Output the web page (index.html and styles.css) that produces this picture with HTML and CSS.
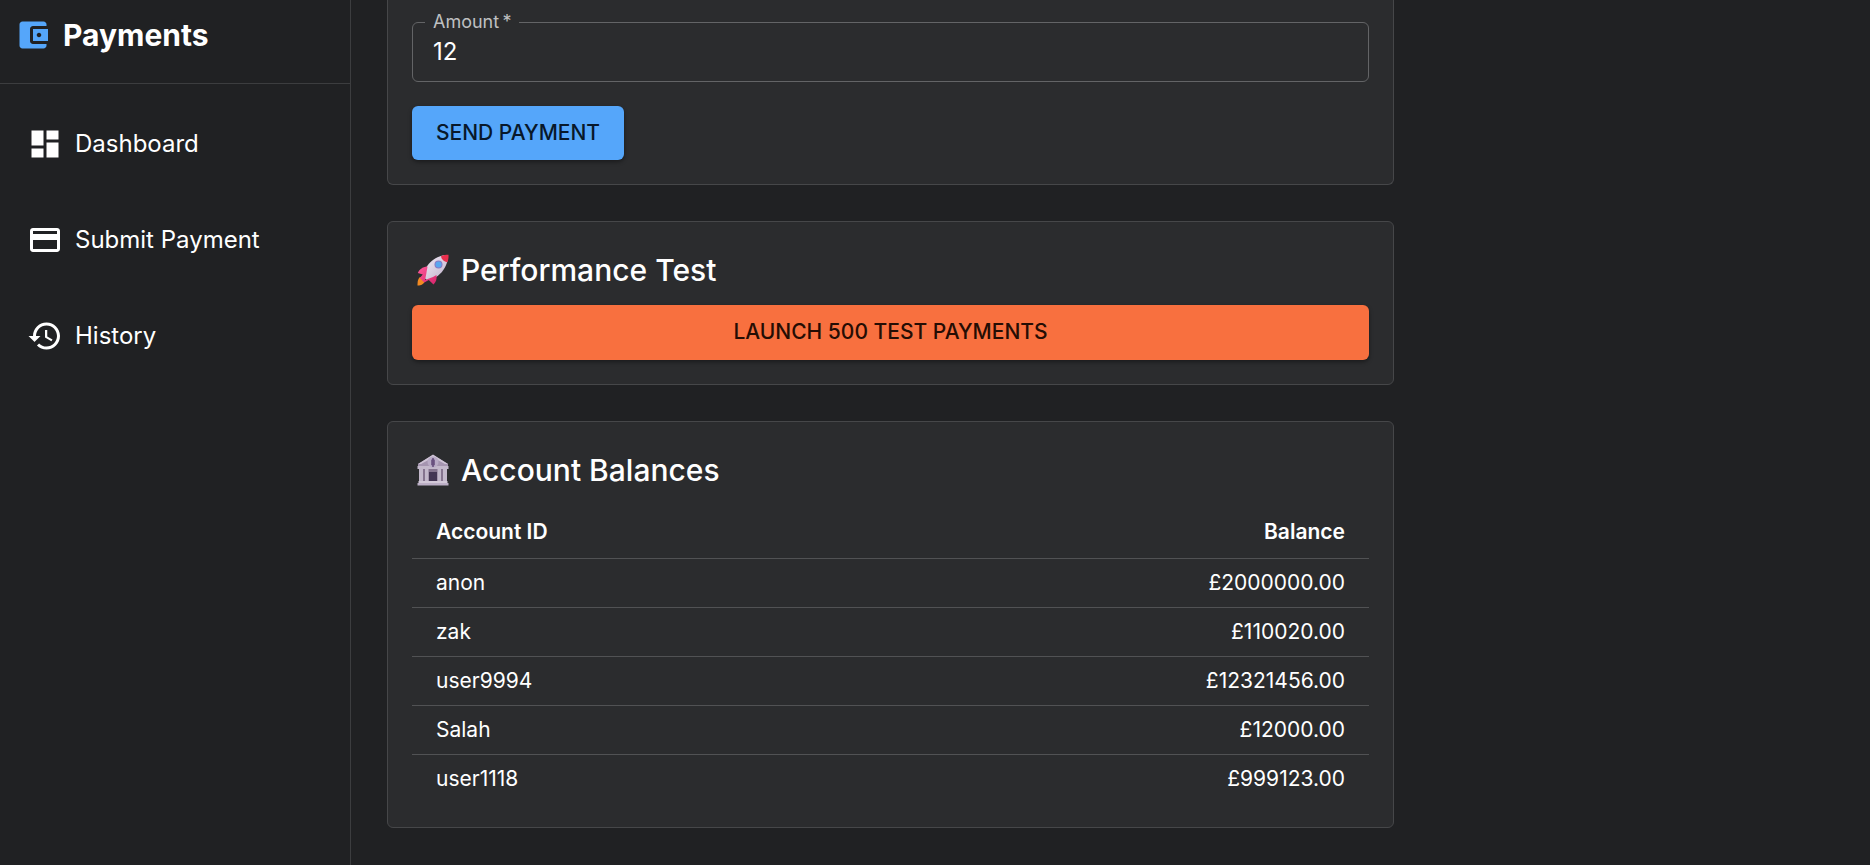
FILE: index.html
```html
<!DOCTYPE html>
<html lang="en">
<head>
<meta charset="utf-8">
<title>Payments</title>
<link rel="stylesheet" href="styles.css">
</head>
<body>
<div class="app">
  <aside class="sidebar">
    <div class="brand">
      <svg class="icon brand-icon" viewBox="0 0 24 24" aria-hidden="true"><path d="M21 18v1c0 1.1-.9 2-2 2H5c-1.11 0-2-.9-2-2V5c0-1.1.89-2 2-2h14c1.1 0 2 .9 2 2v1h-9c-1.11 0-2 .9-2 2v8c0 1.1.89 2 2 2zm-9-2h10V8H12zm4-2.5c-.83 0-1.5-.67-1.5-1.5s.67-1.5 1.5-1.5 1.5.67 1.5 1.5-.67 1.5-1.5 1.5"/></svg>
      <span>Payments</span>
    </div>
    <nav class="nav">
      <a class="nav-item" href="#dashboard">
        <svg class="icon" viewBox="0 0 24 24" aria-hidden="true"><path d="M3 13h8V3H3zm0 8h8v-6H3zm10 0h8V11h-8zm0-18v6h8V3z"/></svg>
        <span class="nav-label">Dashboard</span>
      </a>
      <a class="nav-item" href="#submit">
        <svg class="icon" viewBox="0 0 24 24" aria-hidden="true"><path d="M20 4H4c-1.11 0-1.99.89-1.99 2L2 18c0 1.11.89 2 2 2h16c1.11 0 2-.89 2-2V6c0-1.11-.89-2-2-2m0 14H4v-6h16zm0-10H4V6h16z"/></svg>
        <span class="nav-label">Submit Payment</span>
      </a>
      <a class="nav-item" href="#history">
        <svg class="icon" viewBox="0 0 24 24" aria-hidden="true"><path d="M13 3c-4.97 0-9 4.03-9 9H1l3.89 3.89.07.14L9 12H6c0-3.87 3.13-7 7-7s7 3.13 7 7-3.13 7-7 7c-1.93 0-3.68-.79-4.94-2.06l-1.42 1.42C8.27 19.99 10.51 21 13 21c4.97 0 9-4.03 9-9s-4.03-9-9-9m-1 5v5l4.28 2.54.72-1.21-3.5-2.08V8z"/></svg>
        <span class="nav-label">History</span>
      </a>
    </nav>
  </aside>

  <main class="main">
    <form class="card card-form">
      <fieldset class="field">
        <legend><label for="amount">Amount&thinsp;*</label></legend>
        <input id="amount" type="text" inputmode="decimal" value="12" required>
      </fieldset>
      <button class="button button-primary" type="button">SEND PAYMENT</button>
    </form>

    <section class="card">
      <h2 class="title">
        <svg class="emoji" viewBox="0 0 32 32" aria-hidden="true">
          <defs>
            <linearGradient id="hull" x1="0" y1="0" x2="1" y2="1"><stop offset="0" stop-color="#f4edf8"/><stop offset="1" stop-color="#bfb0c9"/></linearGradient>
            <linearGradient id="fin" x1="0" y1="0" x2="1" y2="1"><stop offset="0" stop-color="#ff5a9c"/><stop offset="1" stop-color="#d6246a"/></linearGradient>
          </defs>
          <path fill="#f28a22" d="M3 23c-2 2-2.500 4-2.500 8.500 2.500.2 6.500-.8 7.500-5z"/>
          <path fill="url(#hull)" d="M6 23C7 12 17 2 29 1l2 2c-1 12-10 22-21 23z"/>
          <path fill="#e92f4d" d="M24 2.300C27 1 29 .7 31.500.8c.2 2.700-.1 5-1.200 7.500-3-.4-6-3-6.300-6z"/>
          <circle cx="21.500" cy="10.500" r="4" fill="#8a79c4"/>
          <circle cx="21.500" cy="10.500" r="3" fill="#5aa7ef"/>
          <path fill="url(#fin)" d="M10.500 12.500C5 13 2.500 15.500.8 19l5 1.500-3 3.500 4.500 4.500 4.500-2.500 4.700 4.500c2.500-2.500 3.500-5 3-9.500l-3.500 2-8 3c1-4 1.500-8 2.500-13z"/>
        </svg>
        <span>Performance Test</span>
      </h2>
      <button class="button button-accent" type="button">LAUNCH 500 TEST PAYMENTS</button>
    </section>

    <section class="card">
      <h2 class="title">
        <svg class="emoji" viewBox="0 0 32 32" aria-hidden="true">
          <path fill="#85748f" d="M3 14h26v14H3z"/>
          <path fill="#443654" d="M12 18h8v10h-8z"/>
          <path fill="#a595b0" d="M16 1 31 10v4H1v-4z"/>
          <path fill="#cfc4d6" d="M16 .5 31 10h-3L16 3.500 4 10H1z"/>
          <path fill="#c3b8cb" d="M.5 12h31v3H.5zM2 15h4v12H2zM8 15h3.500v12H8zM20.500 15H24v12h-3.500zM26 15h4v12h-4z"/>
          <circle cx="16" cy="8" r="5.500" fill="#b9abc6"/>
          <path fill="#69517f" d="M15.200 4h1.600v1l1 1v5l-1 .5v1.500h-1.600v-1.500l-1-.5V6l1-1z"/>
          <path fill="#d3c9d9" d="M1.500 27h29v2h-29z"/>
          <path fill="#bdb0c7" d="M.5 29h31v2.500H.5z"/>
        </svg>
        <span>Account Balances</span>
      </h2>
      <table class="balances">
        <thead>
          <tr><th scope="col">Account ID</th><th scope="col">Balance</th></tr>
        </thead>
        <tbody>
          <tr><td>anon</td><td>£2000000.00</td></tr>
          <tr><td>zak</td><td>£110020.00</td></tr>
          <tr><td>user9994</td><td>£12321456.00</td></tr>
          <tr><td>Salah</td><td>£12000.00</td></tr>
          <tr><td>user1118</td><td>£999123.00</td></tr>
        </tbody>
      </table>
    </section>
  </main>
</div>
</body>
</html>
```

FILE: styles.css
```css
* {
  box-sizing: border-box;
}

body {
  margin: 0;
  background: #202123;
  color: #fff;
  font-family: Inter, "Liberation Sans", sans-serif;
  font-size: 21px;
}

.app {
  display: flex;
  min-height: 100vh;
}

.sidebar {
  flex: none;
  width: 351px;
  border-right: 1px solid #3c3d3f;
  background: #202123;
}

.brand {
  display: flex;
  align-items: center;
  gap: 12px;
  height: 84px;
  padding: 0 15px 13px;
  border-bottom: 1px solid #3c3d3f;
  font-size: 30px;
  font-weight: 700;
}

.icon {
  flex: none;
  width: 36px;
  height: 36px;
  fill: currentColor;
}

.brand-icon {
  color: #55a6fa;
}

.nav {
  display: flex;
  flex-direction: column;
  gap: 24px;
  padding: 24px 0;
}

.nav-item {
  display: flex;
  align-items: center;
  gap: 12px;
  height: 72px;
  padding: 0 27px;
  color: inherit;
  font-size: 24px;
  text-decoration: none;
}

.nav-label {
  padding-bottom: 2px;
}

.main {
  display: flex;
  flex: 1;
  flex-direction: column;
  align-items: flex-start;
  gap: 36px;
  padding: 0 36px 36px;
}

.card {
  width: 100%;
  max-width: 1007px;
  padding: 24px;
  border: 1px solid #464749;
  border-radius: 6px;
  background: #2b2c2e;
}

.card-form {
  padding-top: 10px;
  border-top: 0;
  border-radius: 0 0 6px 6px;
}

.field {
  min-width: 0;
  margin: 0 0 24px;
  padding: 0 20px;
  border: 1px solid #636466;
  border-radius: 6px;
}

.field legend {
  margin-left: -8px;
  padding: 0 8px;
  color: #bfc0c1;
  font-size: 18px;
  line-height: 24px;
}

.field input {
  display: block;
  width: 100%;
  height: 47px;
  padding: 0 0 12px;
  border: 0;
  outline: 0;
  background: transparent;
  color: inherit;
  font: inherit;
  font-size: 24px;
}

.button {
  display: block;
  height: 54px;
  padding: 0 24px 2px;
  border: 0;
  border-radius: 6px;
  box-shadow: 0 2px 4px rgba(0, 0, 0, 0.4);
  font: inherit;
  font-weight: 500;
  font-size: 21px;
}

.button-primary {
  background: #55a6fa;
  color: #08182a;
}

.button-accent {
  width: 100%;
  height: 55px;
  background: #f8703f;
  color: #250d04;
}

.title {
  display: flex;
  align-items: center;
  gap: 12px;
  margin: 0 0 11px;
  padding-left: 5px;
  font-size: 30px;
  font-weight: 500;
  line-height: 48px;
}

.emoji {
  flex: none;
  width: 32px;
  height: 32px;
}

.balances {
  width: 100%;
  border-collapse: collapse;
}

.balances th,
.balances td {
  height: 49px;
  padding: 0 24px;
  border-bottom: 1px solid #515254;
  text-align: left;
}

.balances th {
  height: 53px;
  font-weight: 600;
}

.balances th:last-child,
.balances td:last-child {
  text-align: right;
}

.balances tbody tr:last-child td {
  border-bottom: 0;
}
```
